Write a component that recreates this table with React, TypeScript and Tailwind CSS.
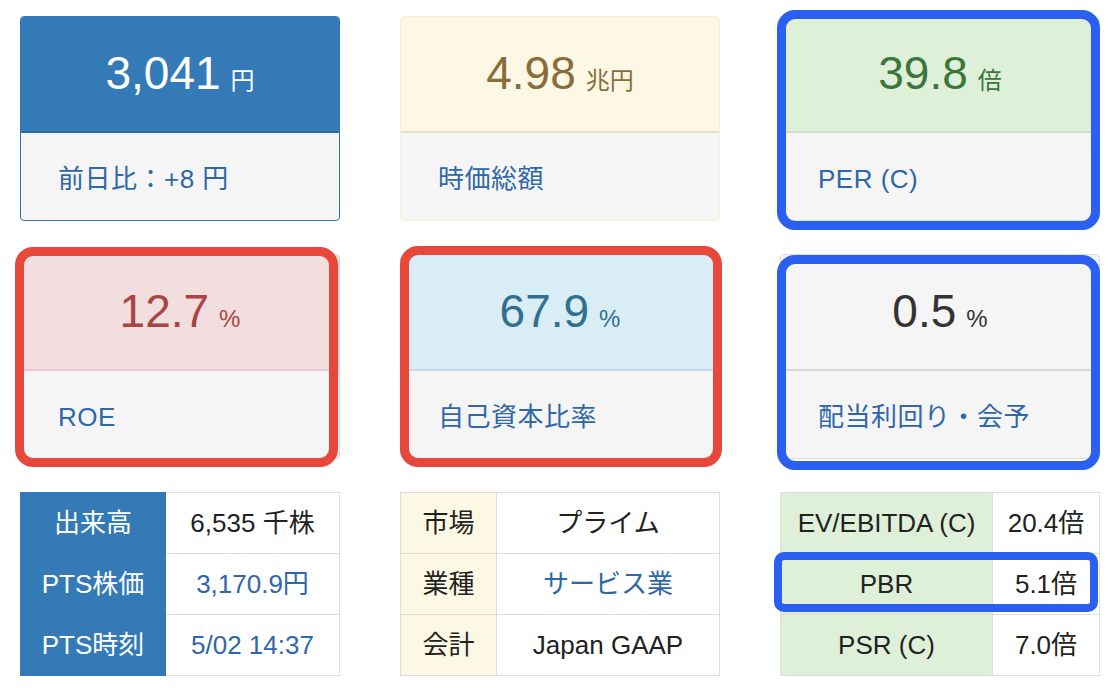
const font = "font-[family-name:'Liberation_Sans','Noto_Sans_CJK_JP',sans-serif]";

type Card = {
  value: string;
  unit: string;
  label: string;
  head: string;
  num: string;
  border: string;
  line: string;
  mark?: string;
};

const cards: Card[] = [
  {
    value: "3,041",
    unit: "円",
    label: "前日比：+8 円",
    head: "bg-[#337ab7]",
    num: "text-white",
    border: "border-[#3573ad]",
    line: "border-[#2e6da4]",
  },
  {
    value: "4.98",
    unit: "兆円",
    label: "時価総額",
    head: "bg-[#fcf8e3]",
    num: "text-[#8a6d3b]",
    border: "border-[#f7efd6]",
    line: "border-[#efe2c4]",
  },
  {
    value: "39.8",
    unit: "倍",
    label: "PER (C)",
    head: "bg-[#dff0d8]",
    num: "text-[#3c763d]",
    border: "border-[#d6e9c6]",
    line: "border-[#cfdfc4]",
    mark: "-left-[3px] right-0 -top-[6px] -bottom-[9px] border-[#2a5ff2]",
  },
  {
    value: "12.7",
    unit: "%",
    label: "ROE",
    head: "bg-[#f2dede]",
    num: "text-[#a94442]",
    border: "border-[#ebccd1]",
    line: "border-[#e2cbd0]",
    mark: "-left-[5px] right-[2px] -top-[7px] -bottom-[8px] border-[#e8473b]",
  },
  {
    value: "67.9",
    unit: "%",
    label: "自己資本比率",
    head: "bg-[#d9edf7]",
    num: "text-[#31708f]",
    border: "border-[#bce8f1]",
    line: "border-[#c3d9e6]",
    mark: "left-0 -right-[2px] -top-[8px] -bottom-[8px] border-[#e8473b]",
  },
  {
    value: "0.5",
    unit: "%",
    label: "配当利回り・会予",
    head: "bg-[#f5f5f5]",
    num: "text-[#333333]",
    border: "border-[#dddddd]",
    line: "border-[#d8d8d8]",
    mark: "-left-[3px] right-0 top-[1px] -bottom-[11px] border-[#2a5ff2]",
  },
];

function StatCard({ c }: { c: Card }) {
  return (
    <div className="relative">
      <div className={`flex h-[205px] flex-col overflow-hidden rounded-[4px] border ${c.border} bg-[#f5f5f5]`}>
        <div className={`flex h-[116px] flex-none items-center justify-center border-b-2 pb-[2px] ${c.line} ${c.head}`}>
          <div className={`flex items-baseline ${c.num}`}>
            <span className="text-[46px] leading-none">{c.value}</span>
            <span className="ml-[10px] text-[24px] leading-none">{c.unit}</span>
          </div>
        </div>
        <div className="flex flex-1 items-center pl-[37px] pt-[6px] text-[26px] tracking-[0.5px] text-[#2f67a8]">
          {c.label}
        </div>
      </div>
      {c.mark && (
        <div className={`pointer-events-none absolute rounded-[18px] border-[9px] ${c.mark}`} />
      )}
    </div>
  );
}

type Row = { k: string; v: string; blue?: boolean };

function InfoTable({
  rows,
  labelW,
  labelCls,
  labelLine,
  children,
}: {
  rows: Row[];
  labelW: string;
  labelCls: string;
  labelLine: string;
  children?: React.ReactNode;
}) {
  return (
    <div className="relative">
      <table className="w-full border-collapse text-[26px]">
        <tbody>
          {rows.map((r, i) => (
            <tr key={r.k} className="h-[61px]">
              <td
                className={`${labelW} border ${i > 0 ? labelLine : ""} border-[#dddddd] text-center ${labelCls}`}
              >
                {r.k}
              </td>
              <td
                className={`border border-[#dddddd] bg-white text-center ${r.blue ? "text-[#2f67a8]" : "text-[#222222]"}`}
              >
                {r.v}
              </td>
            </tr>
          ))}
        </tbody>
      </table>
      {children}
    </div>
  );
}

export default function App() {
  return (
    <div className={`h-[688px] w-[1120px] bg-white px-[20px] pt-[16px] ${font}`}>
      <div className="grid grid-cols-3 gap-x-[60px] gap-y-[33px]">
        {cards.map((c) => (
          <StatCard key={c.label} c={c} />
        ))}

        <InfoTable
          labelW="w-[145px]"
          labelCls="bg-[#337ab7] text-white !border-[#337ab7]"
          labelLine="border-t-[#bcd9f0]"
          rows={[
            { k: "出来高", v: "6,535 千株" },
            { k: "PTS株価", v: "3,170.9円", blue: true },
            { k: "PTS時刻", v: "5/02 14:37", blue: true },
          ]}
        />

        <InfoTable
          labelW="w-[96px]"
          labelCls="bg-[#fcf8e3] text-[#222222]"
          labelLine=""
          rows={[
            { k: "市場", v: "プライム" },
            { k: "業種", v: "サービス業", blue: true },
            { k: "会計", v: "Japan GAAP" },
          ]}
        />

        <InfoTable
          labelW="w-[212px]"
          labelCls="bg-[#dff0d8] text-[#222222]"
          labelLine=""
          rows={[
            { k: "EV/EBITDA (C)", v: "20.4倍" },
            { k: "PBR", v: "5.1倍" },
            { k: "PSR (C)", v: "7.0倍" },
          ]}
        >
          <div className="pointer-events-none absolute -left-[6px] right-[2px] top-[60px] h-[60px] rounded-[10px] border-[8px] border-[#2a5ff2]" />
        </InfoTable>
      </div>
    </div>
  );
}
